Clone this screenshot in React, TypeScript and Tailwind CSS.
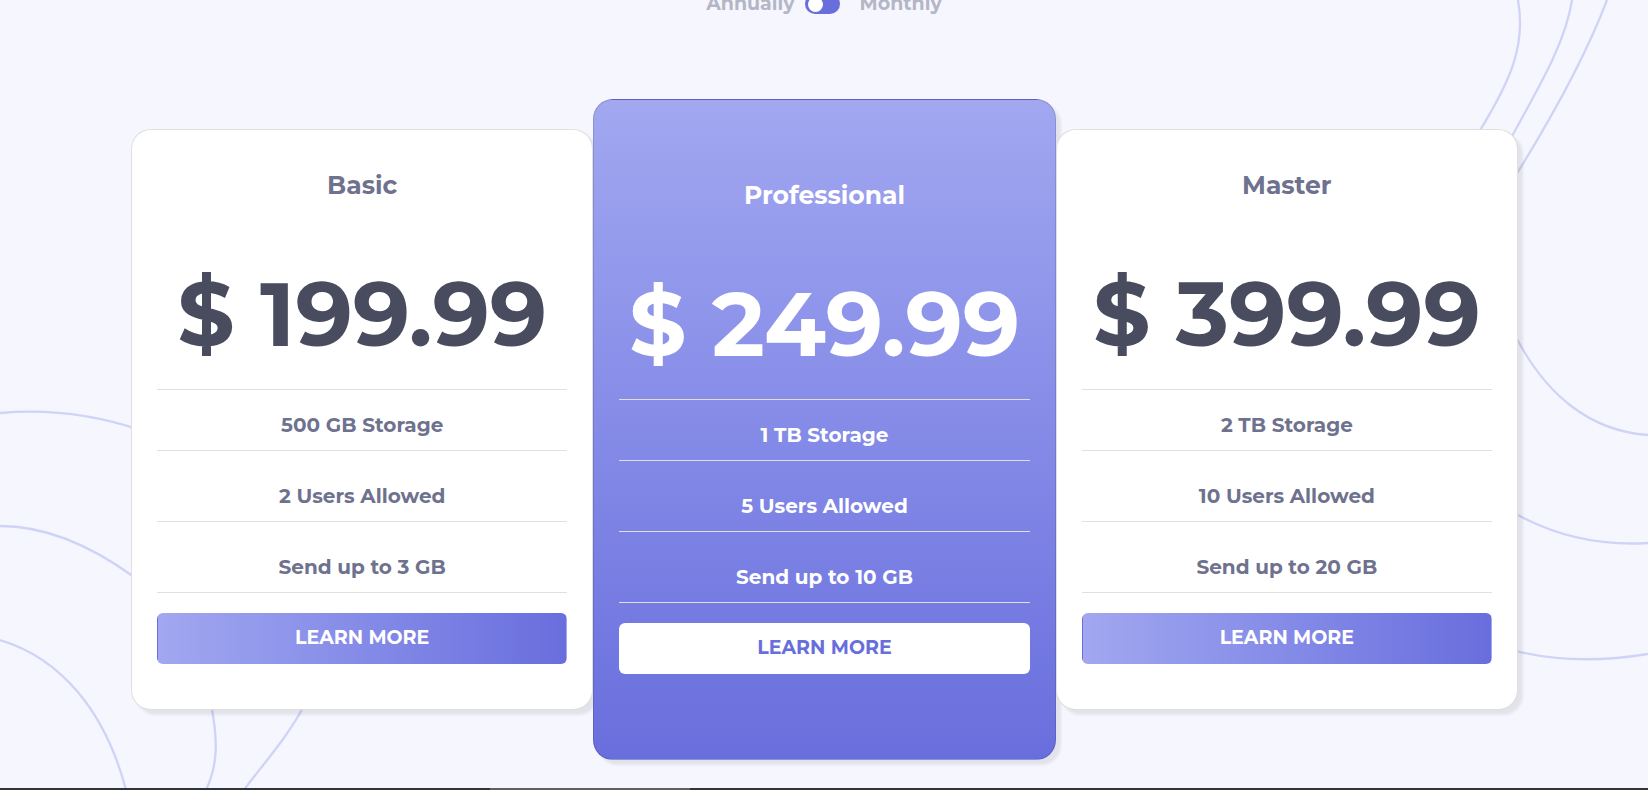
import React, { useState } from "react";

type Plan = {
  name: string;
  monthly: string;
  annual: string;
  features: string[];
  featured?: boolean;
};

const plans: Plan[] = [
  {
    name: "Basic",
    annual: "199.99",
    monthly: "19.99",
    features: ["500 GB Storage", "2 Users Allowed", "Send up to 3 GB"],
  },
  {
    name: "Professional",
    annual: "249.99",
    monthly: "24.99",
    features: ["1 TB Storage", "5 Users Allowed", "Send up to 10 GB"],
    featured: true,
  },
  {
    name: "Master",
    annual: "399.99",
    monthly: "39.99",
    features: ["2 TB Storage", "10 Users Allowed", "Send up to 20 GB"],
  },
];

function Backdrop() {
  return (
    <div className="pointer-events-none absolute inset-0 overflow-hidden" aria-hidden="true">
      <svg
        className="absolute bottom-0 left-0"
        width="310"
        height="390"
        viewBox="0 400 310 390"
        fill="none"
        stroke="#cfd4f6"
        strokeWidth="2.3"
      >
        <path d="M0 413C45 409 90 413 140 430" />
        <path d="M0 526C45 526 90 545 134 577" />
        <path d="M0 640C60 658 105 710 126 790" />
        <path d="M211 704C218 740 218 765 206 790" />
        <path d="M305 704C286 740 262 765 244 790" />
      </svg>
      <svg
        className="absolute right-0 top-0"
        width="188"
        height="670"
        viewBox="1460 0 188 670"
        fill="none"
        stroke="#cfd4f6"
        strokeWidth="2.3"
      >
        <path d="M1518 0C1526 45 1511 80 1479 132" />
        <path d="M1572 0C1566 40 1543 80 1511 138" />
        <path d="M1607 0C1585 58 1552 117 1516 175" />
        <path d="M1516 337C1546 395 1590 431 1648 435" />
        <path d="M1516 514C1558 537 1600 546 1648 543" />
        <path d="M1516 651C1560 662 1605 661 1648 654" />
      </svg>
    </div>
  );
}

function PlanCard({ plan, isMonthly }: { plan: Plan; isMonthly: boolean }) {
  const f = plan.featured;
  return (
    <article
      className={`flex flex-col rounded-[20px] border border-black/12 px-[25px] text-center shadow-[5px_5px_3px_rgba(0,0,0,0.08)] ${
        f
          ? "bg-linear-to-b from-[#a2a7f0] to-[#696edd] pt-20 pb-[85px] text-white"
          : "mt-[30px] bg-white pt-10 pb-[45px] text-[#6e728e]"
      }`}
    >
      <h2 className="text-[25px] leading-[30px] font-bold">{plan.name}</h2>
      <p
        className={`mt-[70px] text-[90px] leading-[88px] font-bold whitespace-nowrap ${
          f ? "text-white" : "text-[#494c5f]"
        }`}
      >
        $ {isMonthly ? plan.monthly : plan.annual}
      </p>
      <ul className="mt-[31px] flex flex-col gap-[10px] border-t border-[#dfe0e6]">
        {plan.features.map((text) => (
          <li
            key={text}
            className="border-b border-[#dfe0e6] pt-[23px] pb-[13px] text-[20px] leading-6 font-bold"
          >
            {text}
          </li>
        ))}
      </ul>
      <button
        type="button"
        className={`mt-5 h-[51px] rounded-md border border-transparent text-[19px] font-bold ${
          f
            ? "bg-white text-[#696edd]"
            : "bg-linear-to-r from-[#a2a7f0] to-[#696edd] text-white"
        }`}
      >
        LEARN MORE
      </button>
    </article>
  );
}

export default function App() {
  const [isMonthly, setMonthly] = useState(false);

  return (
    <div className="relative flex min-h-screen flex-col overflow-hidden bg-[#f6f6fe] font-[Montserrat,Inter,sans-serif]">
      <Backdrop />
      <div className="relative -mt-2 flex h-6 items-center justify-center text-[19px] leading-6 font-bold text-[#b4b6c6]">
        <label htmlFor="billing">Annually</label>
        <span className="relative ml-[10px] mr-5 flex">
          <input
            id="billing"
            type="checkbox"
            role="switch"
            aria-label="Monthly billing"
            checked={isMonthly}
            onChange={(e) => setMonthly(e.target.checked)}
            className="peer h-5 w-[35px] appearance-none rounded-full bg-[#696edd]"
          />
          <span className="pointer-events-none absolute top-[3px] left-[3px] size-[15px] rounded-full bg-white peer-checked:left-[17px]" />
        </span>
        <label htmlFor="billing">Monthly</label>
      </div>

      <main className="relative mt-[83px] grid grid-cols-3 items-start pr-[130px] pl-[131px]">
        {plans.map((plan) => (
          <PlanCard key={plan.name} plan={plan} isMonthly={isMonthly} />
        ))}
      </main>

      <div className="relative mt-auto flex h-[2px] bg-[#333438]">
        <div className="ml-[490px] w-[200px] bg-[#5f6064]" />
      </div>
    </div>
  );
}
